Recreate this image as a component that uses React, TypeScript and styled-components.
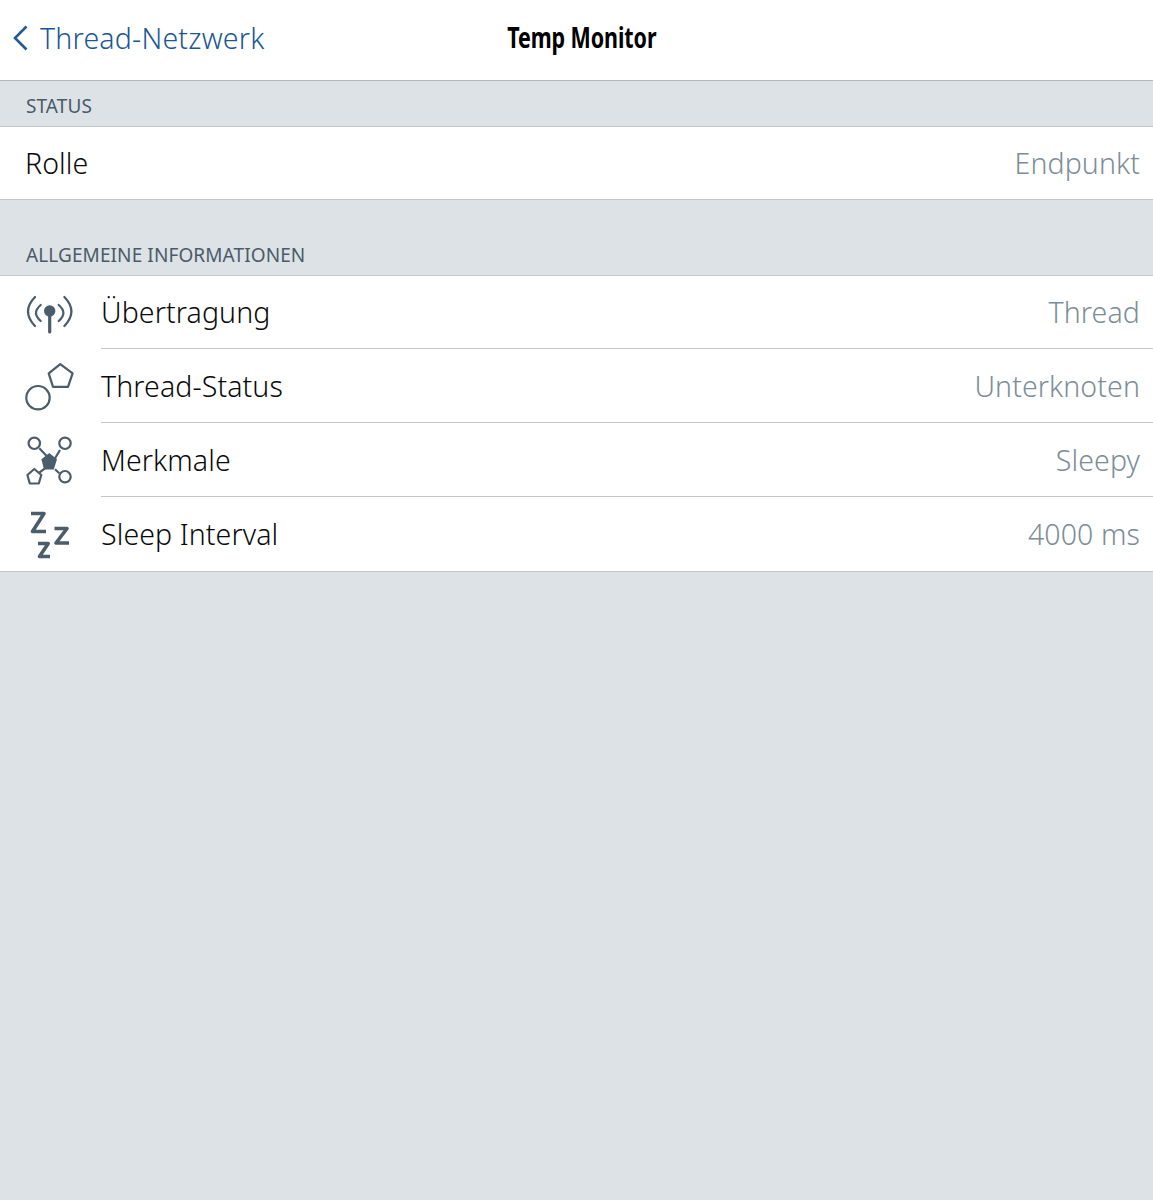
import React from "react";
import styled, { createGlobalStyle } from "styled-components";

const Global = createGlobalStyle`
  html, body { margin: 0; padding: 0; background: #dde2e6; }
  body { font-family: "Noto Sans", "Open Sans", sans-serif; }
`;

const Page = styled.div`
  width: 1153px;
  height: 1200px;
  overflow: hidden;
  background: #dde2e6;
`;

const NavBar = styled.header`
  box-sizing: content-box;
  height: 76px;
  padding-bottom: 4px;
  background: #fff;
  border-bottom: 1px solid #b4b7b9;
  display: grid;
  grid-template-columns: minmax(0, 1fr) auto minmax(0, 1fr);
  align-items: center;
`;

const BackLink = styled.div`
  display: flex;
  align-items: center;
  gap: 12px;
  padding-left: 13px;
  color: #1a5794;
  font-size: 28.5px;
  font-weight: 300;
  letter-spacing: 0.2px;
  line-height: 38px;
  padding-bottom: 1px;
`;

const Title = styled.h1`
  margin: 0 0 0 11px;
  font-weight: 700;
  font-size: 29px;
  line-height: 38px;
  color: #000;
  letter-spacing: -0.1px;
  transform: scaleX(0.74);
  padding-bottom: 3px;
`;

const SectionLabel = styled.div<{ $height: number }>`
  height: ${(p) => p.$height}px;
  box-sizing: border-box;
  display: flex;
  align-items: flex-end;
  padding: 0 0 8px 26px;
  border-bottom: 1px solid #c4c8cb;
  color: #4a5a68;
  font-size: 19px;
  letter-spacing: 0.1px;
  line-height: 24px;
`;

const Group = styled.section`
  background: #fff;
  border-bottom: 1px solid #c4c8cb;
`;

const Row = styled.div<{ $height: number }>`
  display: flex;
  align-items: stretch;
  height: ${(p) => p.$height}px;
`;

const IconCell = styled.div`
  width: 101px;
  flex: none;
  display: flex;
  align-items: center;
  padding-left: 24px;
  box-sizing: border-box;
`;

const RowBody = styled.div<{ $divider?: boolean; $inset?: boolean }>`
  flex: 1;
  display: flex;
  align-items: center;
  justify-content: space-between;
  padding: 0 13px 0 ${(p) => (p.$inset ? 25 : 0)}px;
  font-size: 28.5px;
  font-weight: 300;
  letter-spacing: 0.1px;
  border-bottom: ${(p) => (p.$divider ? "1px solid #c4c8cb" : "none")};
`;

const Label = styled.span`
  color: #0a0a0a;
`;

const Value = styled.span`
  color: #7d8d97;
`;

const ICON = "#4b5c6b";

const Chevron = () => (
  <svg width="15" height="26" viewBox="0 0 15 26" fill="none">
    <path d="M13.5 1.5 L2 13 L13.5 24.5" stroke="#1f5c97" strokeWidth="2.6" />
  </svg>
);

const AntennaIcon = () => (
  <svg width="50" height="50" viewBox="0 0 50 50" fill="none" stroke={ICON} strokeLinecap="round">
    <circle cx="25.7" cy="23" r="5.7" fill={ICON} stroke="none" />
    <path d="M25.7 26 V44" strokeWidth="3.2" />
    <path d="M16.7 17 Q7.3 25 16.7 33 M34.7 17 Q44.1 25 34.7 33" strokeWidth="2.2" />
    <path d="M11 9 Q-3 23.5 11 38 M40.4 9 Q54.4 23.5 40.4 38" strokeWidth="2.2" />
  </svg>
);

const ShapesIcon = () => (
  <svg width="50" height="50" viewBox="0 0 50 50" fill="none" stroke={ICON} strokeWidth="2.2">
    <circle cx="14" cy="36.7" r="11.7" />
    <path d="M36.3 3.2 L48.6 12.4 L44 25.9 L29 25.9 L24.7 12.4 Z" strokeLinejoin="round" />
  </svg>
);

const MeshIcon = () => (
  <svg width="50" height="50" viewBox="0 0 50 50" fill="none" stroke={ICON} strokeWidth="2.2">
    <path d="M15.3 13.3 L22.7 21 M36 15 L30 25 M31 34.3 L35.3 38.3 M15.3 37.7 L21 33.3" />
    <circle cx="10.3" cy="8.3" r="5.7" />
    <circle cx="41" cy="8.3" r="5.7" />
    <circle cx="41" cy="41.7" r="5.7" />
    <path d="M10.3 34 L17.3 40 L14.8 48.5 L5.8 48.5 L3.4 40 Z" strokeLinejoin="round" />
    <path d="M25.3 18 L33 24.3 L29.8 34.6 L20 34.6 L17.4 24.3 Z" fill={ICON} stroke="none" />
  </svg>
);

const SleepIcon = () => (
  <svg width="50" height="50" viewBox="0 0 50 50" fill="none" stroke={ICON} strokeWidth="3.6" strokeLinejoin="round">
    <path d="M7 4.5 H20 L8.5 22.5 H22" />
    <path d="M30.5 19.5 H43 L32 34 H45" />
    <path d="M14 34.5 H24.2 L15.5 47.5 H26" />
  </svg>
);

const rows = [
  { label: "Übertragung", value: "Thread", Icon: AntennaIcon, height: 73 },
  { label: "Thread-Status", value: "Unterknoten", Icon: ShapesIcon, height: 74 },
  { label: "Merkmale", value: "Sleepy", Icon: MeshIcon, height: 74 },
  { label: "Sleep Interval", value: "4000 ms", Icon: SleepIcon, height: 74 },
];

export default function App() {
  return (
    <Page>
      <Global />
      <NavBar>
        <BackLink>
          <Chevron />
          <span>Thread-Netzwerk</span>
        </BackLink>
        <Title>Temp Monitor</Title>
        <span />
      </NavBar>
      <SectionLabel $height={46}>STATUS</SectionLabel>
      <Group>
        <Row $height={72}>
          <RowBody $inset>
            <Label>Rolle</Label>
            <Value>Endpunkt</Value>
          </RowBody>
        </Row>
      </Group>
      <SectionLabel $height={76}>ALLGEMEINE INFORMATIONEN</SectionLabel>
      <Group>
        {rows.map((r, i) => (
          <Row key={r.label} $height={r.height}>
            <IconCell>
              <r.Icon />
            </IconCell>
            <RowBody $divider={i < rows.length - 1}>
              <Label>{r.label}</Label>
              <Value>{r.value}</Value>
            </RowBody>
          </Row>
        ))}
      </Group>
    </Page>
  );
}
